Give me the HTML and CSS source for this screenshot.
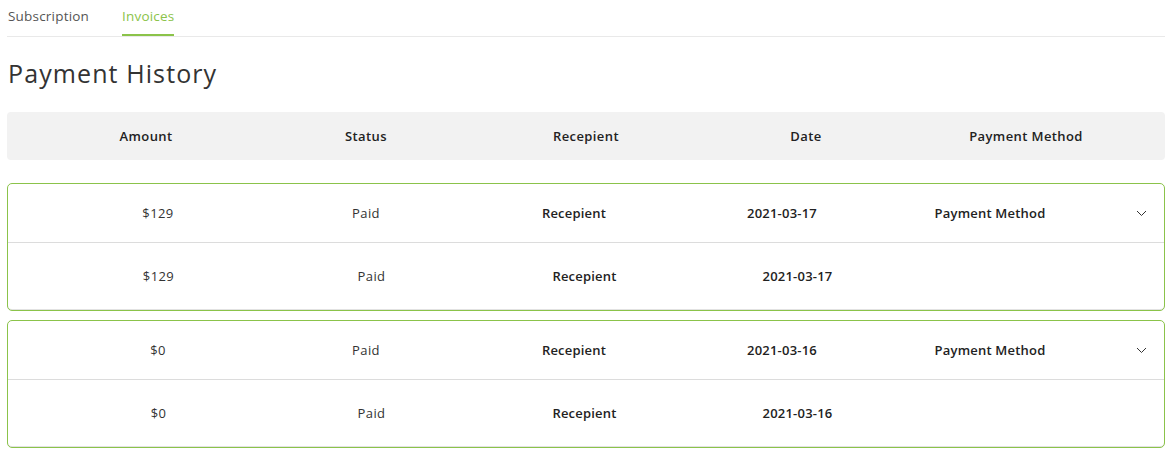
FILE: index.html
```html
<!DOCTYPE html>
<html lang="en">
<head>
<meta charset="utf-8">
<title>Payment History</title>
<link rel="stylesheet" href="styles.css">
</head>
<body>
<div class="page">
  <nav class="tabs">
    <a class="tab">Subscription</a>
    <a class="tab active">Invoices</a>
  </nav>
  <h1 class="title">Payment History</h1>
  <div class="thead">
    <div>Amount</div>
    <div>Status</div>
    <div>Recepient</div>
    <div>Date</div>
    <div>Payment Method</div>
  </div>
  <div class="card">
    <div class="row-main">
      <div class="c">$129</div>
      <div class="c">Paid</div>
      <div class="c b">Recepient</div>
      <div class="c b">2021-03-17</div>
      <div class="c b">Payment Method</div>
      <div class="chev"><svg width="11" height="7" viewBox="0 0 11 7"><polyline points="1,1 5.5,5.5 10,1" fill="none" stroke="#333" stroke-width="1"/></svg></div>
    </div>
    <div class="row-detail">
      <div class="c">$129</div>
      <div class="c">Paid</div>
      <div class="c b">Recepient</div>
      <div class="c b">2021-03-17</div>
    </div>
  </div>
  <div class="card">
    <div class="row-main">
      <div class="c">$0</div>
      <div class="c">Paid</div>
      <div class="c b">Recepient</div>
      <div class="c b">2021-03-16</div>
      <div class="c b">Payment Method</div>
      <div class="chev"><svg width="11" height="7" viewBox="0 0 11 7"><polyline points="1,1 5.5,5.5 10,1" fill="none" stroke="#333" stroke-width="1"/></svg></div>
    </div>
    <div class="row-detail">
      <div class="c">$0</div>
      <div class="c">Paid</div>
      <div class="c b">Recepient</div>
      <div class="c b">2021-03-16</div>
    </div>
  </div>
</div>
</body>
</html>
```
FILE: styles.css
```css
* { box-sizing: border-box; }
body {
  margin: 0;
  font-family: "Open Sans", "DejaVu Sans", sans-serif;
  color: #333;
  background: #fff;
}
.page {
  padding: 0 6px 0 7px;
}
.tabs {
  display: flex;
  gap: 33px;
  height: 37px;
  border-bottom: 1px solid #e9e9e9;
}
.tab {
  display: block;
  padding: 6px 0 0 1px;
  font-size: 13.5px;
  line-height: 20px;
  color: #555;
  letter-spacing: 0.2px;
}
.tab.active {
  color: #8bc34a;
  border-bottom: 2px solid #8bc34a;
  padding-left: 0;
}
.title {
  margin: 18px 0 21px 1px;
  font-size: 25px;
  line-height: 36px;
  font-weight: 400;
  color: #333;
  letter-spacing: 1.1px;
}
.thead {
  display: grid;
  grid-template-columns: repeat(5, 1fr);
  align-items: center;
  height: 48px;
  padding: 0 29px;
  background: #f2f2f2;
  border-radius: 4px;
  font-size: 13px;
  font-weight: 600;
  color: #222;
  text-align: center;
  letter-spacing: 0.4px;
  margin-bottom: 23px;
}
.card {
  border: 1px solid #8bc34a;
  border-radius: 5px;
  box-shadow: inset 0 -1px 0 #e2e2e2;
  margin-bottom: 9px;
  font-size: 13px;
  letter-spacing: 0.4px;
}
.row-main {
  display: grid;
  grid-template-columns: repeat(5, 208px) 1fr;
  align-items: center;
  height: 59px;
  padding-left: 46px;
  border-bottom: 1px solid #dcdcdc;
}
.row-detail {
  display: grid;
  grid-template-columns: repeat(4, 213px) 1fr;
  align-items: center;
  height: 67px;
  padding-left: 44px;
  padding-bottom: 2px;
}
.c { text-align: center; color: #333; }
.c.b { font-weight: 600; color: #222; letter-spacing: 0.2px; }
.chev {
  display: flex;
  justify-content: flex-end;
  padding-right: 17px;
}
.chev svg { display: block; }
```
